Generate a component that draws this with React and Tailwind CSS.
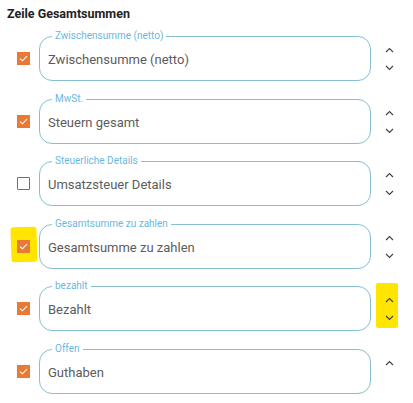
import React from "react";

const rows = [
  { label: "Zwischensumme (netto)", value: "Zwischensumme (netto)", checked: true, up: true, down: true },
  { label: "MwSt.", value: "Steuern gesamt", checked: true, up: true, down: true },
  { label: "Steuerliche Details", value: "Umsatzsteuer Details", checked: false, up: true, down: true },
  { label: "Gesamtsumme zu zahlen", value: "Gesamtsumme zu zahlen", checked: true, up: true, down: true, markCheck: true },
  { label: "bezahlt", value: "Bezahlt", checked: true, up: true, down: true, markArrows: true },
  { label: "Offen", value: "Guthaben", checked: true, up: true, down: false },
];

function Chevron({ dir }) {
  return (
    <svg width="9" height="6" viewBox="0 0 9 6" className="block">
      {dir === "up" ? (
        <path d="M1 5 L4.5 1.5 L8 5" fill="none" stroke="#444" strokeWidth="1.2" />
      ) : (
        <path d="M1 1 L4.5 4.5 L8 1" fill="none" stroke="#444" strokeWidth="1.2" />
      )}
    </svg>
  );
}

function Checkbox({ checked, mark }) {
  return (
    <div className="relative w-[13px] h-[13px] shrink-0">
      {mark && (
        <span className="absolute -left-[6px] -top-[13px] w-[26px] h-[35px] bg-[#ffe500] rounded-[3px] rotate-[-2deg]" />
      )}
      {checked ? (
        <div className="relative w-[13px] h-[13px] bg-[#e97a35] flex items-center justify-center">
          <svg width="9" height="7" viewBox="0 0 9 7">
            <path d="M1 3.6 L3.4 5.8 L8 1.2" fill="none" stroke="#fff" strokeWidth="1.1" />
          </svg>
        </div>
      ) : (
        <div className="relative w-[13px] h-[13px] border border-[#6f6f6f] rounded-[1px] bg-white" />
      )}
    </div>
  );
}

function Row({ row }) {
  return (
    <div className="flex items-center">
      <Checkbox checked={row.checked} mark={row.markCheck} />
      <div className="relative ml-[9px] w-[332px] h-[45px] border border-[#86bfd2] rounded-[13px] flex items-center pl-[8px] pt-[3px]">
        <span className="absolute -top-[7px] left-[12px] bg-white px-[3px] text-[10px] leading-[12px] text-[#6ab8de]">
          {row.label}
        </span>
        <span className="text-[13px] text-[#5c5c5c]">{row.value}</span>
      </div>
      <div className="relative ml-[14px] w-[9px] h-[45px] flex flex-col items-center pt-[11px] gap-[12px]">
        {row.markArrows && (
          <span className="absolute -left-[9px] -top-[3px] w-[22px] h-[45px] bg-[#ffe500] rounded-[2px]" />
        )}
        <span className="relative">{row.up && <Chevron dir="up" />}</span>
        <span className="relative">{row.down && <Chevron dir="down" />}</span>
      </div>
    </div>
  );
}

export default function App() {
  return (
    <div className="w-[413px] h-[403px] bg-white overflow-hidden font-['Roboto',sans-serif] px-[7px] pt-[6px]">
      <h2 className="text-[12.5px] leading-[16px] font-bold text-[#222]">Zeile Gesamtsummen</h2>
      <div className="mt-[14px] ml-[10px] flex flex-col gap-[17.5px]">
        {rows.map((row) => (
          <Row key={row.label} row={row} />
        ))}
      </div>
    </div>
  );
}
